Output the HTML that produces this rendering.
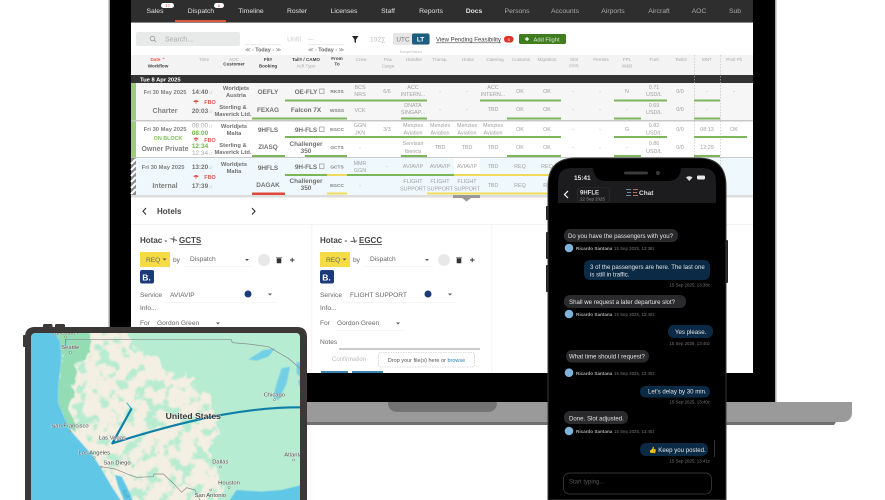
<!DOCTYPE html>
<html><head><meta charset="utf-8">
<style>
html,body{margin:0;padding:0;background:#fff;width:885px;height:500px;overflow:hidden}
svg{display:block;font-family:"Liberation Sans",sans-serif}
.c{text-anchor:middle}
.r{text-anchor:end}
.n{font-size:6.800px;fill:#e0e0e0;text-anchor:middle}
.n2{font-size:6.800px;fill:#aaa;text-anchor:middle}
.h{font-size:4.600px;fill:#aaa;text-anchor:middle}
.hb{font-size:4.600px;fill:#444;font-weight:bold;text-anchor:middle}
.g{font-size:5.400px;fill:#a0a0a0;text-anchor:middle}
.b{font-size:6.400px;fill:#707070;font-weight:bold;text-anchor:middle}
.s{font-size:5.800px;fill:#707070;font-weight:bold;text-anchor:middle}
.a{font-size:4.800px;fill:#808080;font-weight:bold;text-anchor:middle}
.d{font-size:5.800px;fill:#808080;font-weight:bold;text-anchor:middle}
.t{font-size:7px;fill:#808080;font-weight:bold;text-anchor:middle}
.lt{font-size:3.400px;fill:#bbb}
.fbo{font-size:5.400px;fill:#e2574c;font-weight:bold;text-anchor:middle}
.p{font-size:6.600px;fill:#666}
.ph{font-size:8px;fill:#444;font-weight:bold}
.m{font-size:6.100px;fill:#e4e4e4}
.nm{font-size:4.600px;fill:#aaa;font-weight:bold}
.dt{font-size:4.400px;fill:#777}
.ml{font-size:17.500px;fill:#444;text-anchor:middle;stroke:#fff;stroke-width:1.500px;paint-order:stroke}
</style></head><body>
<svg width="885" height="500" viewBox="0 0 885 500" xmlns="http://www.w3.org/2000/svg">
<defs>
<filter id="bl" x="0" y="0" width="100%" height="100%" color-interpolation-filters="sRGB"><feTurbulence type="fractalNoise" baseFrequency=".028" numOctaves="4" seed="7"/><feColorMatrix type="matrix" values="0 0 0 0 .72  0 0 0 0 .925  0 0 0 0 .82  9 0 0 0 -4.700"/><feGaussianBlur stdDeviation="1.500"/></filter>
<filter id="ro" x="-5%" y="-5%" width="110%" height="110%" color-interpolation-filters="sRGB"><feTurbulence type="fractalNoise" baseFrequency=".025" numOctaves="3" seed="3" result="t"/><feDisplacementMap in="SourceGraphic" in2="t" scale="45" xChannelSelector="R" yChannelSelector="G"/><feGaussianBlur stdDeviation="1.200"/></filter>
<filter id="sf"><feGaussianBlur stdDeviation="1.500"/></filter>
<clipPath id="mc"><path d="M31 500V338Q31 333 36 333H296Q300 333 300 338V500Z"/></clipPath>
<clipPath id="land"><path d="M100 0L135 65L140 110L130 200L130 250L165 330L235 410L255 440L290 500L330 545H900V0Z"/></clipPath>
</defs>
<rect width="885" height="500" fill="#fff"/>
<!-- laptop -->
<path d="M109 0H776V403H109Z" fill="#000"/>
<rect x="108.500" y="0" width="1.500" height="403" fill="#999"/>
<rect x="775" y="0" width="1.500" height="403" fill="#aaa"/>
<path d="M109 422H836L834 425H109Z" fill="#707070"/>
<path d="M109 402H852V412Q852 422 842 422H109Z" fill="#9a9a9a"/>
<path d="M388 402H497Q497 412 487 412H398Q388 412 388 402Z" fill="#737373"/>
<g style="filter:blur(.3px)">
<rect x="131" y="0" width="622" height="373" fill="#fff"/>
<rect x="131" y="0" width="622" height="22" fill="#2e2e2e"/>
<rect x="131" y="22" width="622" height="1" fill="#888"/>
<rect x="175" y="20" width="51" height="2" fill="#d9573a"/>
<text class="n" x="155" y="13">Sales</text><text class="n" x="201" y="13">Dispatch</text><text class="n" x="251" y="13">Timeline</text><text class="n" x="297" y="13">Roster</text><text class="n" x="344" y="13">Licenses</text><text class="n" x="388" y="13">Staff</text><text class="n" x="431" y="13">Reports</text><text class="n" x="474" y="13" font-weight="bold">Docs</text>
<text class="n2" x="517" y="13">Persons</text><text class="n2" x="565" y="13">Accounts</text><text class="n2" x="613" y="13">Airports</text><text class="n2" x="659" y="13">Aircraft</text><text class="n2" x="699" y="13">AOC</text><text class="n2" x="735" y="13">Sub</text>
<rect x="161" y="3" width="13" height="5" rx="2.500" fill="#fff"/><text class="c" x="167.500" y="7" font-size="4" fill="#d33">17</text>
<rect x="214" y="3" width="10" height="5" rx="2.500" fill="#fff"/><text class="c" x="219" y="7" font-size="4" fill="#d33">6</text>
<!-- toolbar -->
<rect x="136" y="32" width="104" height="14" rx="2" fill="#e8eaea"/>
<circle cx="152.500" cy="38.500" r="2.300" fill="none" stroke="#999" stroke-width=".8"/><path d="M154.200 40.200L156 42" stroke="#999" stroke-width=".8"/>
<text x="165" y="41.500" font-size="7" fill="#aaa">Search...</text>
<rect x="245" y="44.500" width="36" height=".6" fill="#ddd"/><rect x="308" y="44.500" width="36" height=".6" fill="#ddd"/>
<text x="287" y="41.500" font-size="7" fill="#ccc">Until</text><text x="308" y="41.500" font-size="6" fill="#ccc">—</text>
<text class="c" x="263" y="51.500" font-size="5.400" fill="#888">≪ ‹ <tspan font-weight="bold" fill="#666">Today</tspan> › ≫</text>
<text class="c" x="326" y="51.500" font-size="5.400" fill="#888">≪ ‹ <tspan font-weight="bold" fill="#666">Today</tspan> › ≫</text>
<path d="M352 36H358.500L356 39.500V43L354.500 42V39.500Z" fill="#222"/>
<text x="370" y="41.500" font-size="6.600" fill="#bbb">102∑</text>
<rect x="393" y="33" width="37" height="12" rx="2" fill="#e6e6e6"/><rect x="412" y="33.500" width="17.500" height="11" rx="2" fill="#1b5e80"/>
<text class="c" x="403" y="41.500" font-size="6.400" fill="#777">UTC</text><text class="c" x="420.500" y="41.500" font-size="6.400" fill="#fff" font-weight="bold">LT</text>
<text class="c" x="411" y="53" font-size="3.400" fill="#bbb">Europe/Vienna</text>
<text x="436" y="41.500" font-size="6" fill="#444" text-decoration="underline">View Pending Feasibility</text>
<rect x="504" y="36" width="9.500" height="6.500" rx="3.200" fill="#e0302a"/><text class="c" x="508.700" y="41" font-size="4" fill="#fff">6</text>
<rect x="519" y="34" width="47" height="10" rx="1.500" fill="#3f7d20"/>
<path d="M525 39h4M527 37v4" stroke="#fff" stroke-width="1.200"/><text x="533.500" y="41.300" font-size="5.800" fill="#dcebd0">Add Flight</text>
<!-- header -->
<rect x="131" y="55" width="622" height="20" fill="#f3f3f3"/>
<text x="158" y="61" font-size="4.600" font-weight="bold" fill="#e2574c" class="c">Date ⌃</text><text class="hb" x="158" y="67.500">Workflow</text>
<text class="h" x="204" y="61">Time</text><text class="h" x="234" y="61">AOC</text><text class="hb" x="234" y="65.500">Customer</text>
<text class="hb" x="268" y="61">Flt#</text><text class="hb" x="268" y="67.500">Booking</text><text class="hb" x="306" y="61">Tail# / CAMO</text><text class="h" x="306" y="67.500">Acft Type</text>
<text class="hb" x="337" y="60">From</text><text class="hb" x="337" y="65.500">To</text><text class="h" x="361" y="61">Crew</text><text class="h" x="388" y="61">Pax</text><text class="h" x="388" y="67.500">Cargo</text>
<text class="h" x="414" y="61">Handler</text><text class="h" x="440" y="61">Transp.</text><text class="h" x="468" y="61">Hotac</text><text class="h" x="495" y="61">Catering</text><text class="h" x="521" y="61">Customs</text><text class="h" x="547" y="61">Migration</text>
<text class="h" x="574" y="61">Slot</text><text class="h" x="574" y="67.500">PPR</text><text class="h" x="601" y="61">Permits</text><text class="h" x="627" y="61">FPL</text><text class="h" x="627" y="67.500">W&amp;B</text><text class="h" x="654" y="61">Fuel</text><text class="h" x="681" y="61">Tasks</text><text class="h" x="707" y="61">MNT</text><text class="h" x="734" y="61">Post Flt</text>
<rect x="131" y="75" width="622" height="8" fill="#333"/>
<text x="140" y="81.300" font-size="5.800" fill="#fff" font-weight="bold">Tue 8 Apr 2025</text>
<!-- rows bg -->
<rect x="131" y="83" width="622" height="37" fill="#f6f6f6"/>
<rect x="131" y="120" width="622" height="1.500" fill="#c8c8c8"/>
<rect x="131" y="121.500" width="622" height="36" fill="#fff"/>
<rect x="131" y="157" width="622" height="1.200" fill="#ccc"/>
<rect x="131" y="158" width="622" height="37" fill="#eff8fc"/>
<rect x="131" y="195" width="622" height="2.500" fill="#ddd"/>
<rect x="131" y="83" width="5" height="37" fill="#9ccc7a"/><rect x="131" y="121.500" width="5" height="36" fill="#9ccc7a"/>
<rect x="131" y="158" width="5" height="37" fill="#8a8a8a"/>
<path d="M131 164L136 159M131 170L136 165M131 176L136 171M131 182L136 177M131 188L136 183M131 194L136 189" stroke="#fff" stroke-width="2"/>
<rect x="454" y="158" width="26" height="16" fill="#fff"/>
<path d="M694.500 55V195M720.500 55V195" stroke="#bbb" stroke-width=".6" stroke-dasharray="1.500 1.500"/>
<!-- bars -->
<g fill="#7db65a">
<rect x="285" y="99.500" width="142" height="2"/><rect x="480" y="99.500" width="81" height="2"/><rect x="614" y="99.500" width="53" height="2"/><rect x="694" y="99.500" width="26" height="2"/>
<rect x="252" y="117.500" width="95" height="2"/><rect x="401" y="117.500" width="26" height="2"/><rect x="507" y="117.500" width="54" height="2"/><rect x="614" y="117.500" width="27" height="2"/><rect x="694" y="117.500" width="26" height="2"/>
<rect x="285" y="136" width="276" height="2"/><rect x="614" y="136" width="53" height="2"/><rect x="694" y="136" width="53" height="2"/>
<rect x="252" y="155" width="33" height="2"/><rect x="305" y="155" width="42" height="2"/><rect x="401" y="155" width="26" height="2"/><rect x="507" y="155" width="54" height="2"/><rect x="614" y="155" width="27" height="2"/><rect x="694" y="155" width="26" height="2"/>
<rect x="285" y="174" width="42" height="2"/><rect x="347" y="174" width="107" height="2"/>
</g>
<g fill="#f0dc5a"><rect x="327" y="174" width="20" height="2"/><rect x="454" y="174" width="106" height="2"/><rect x="327" y="192.500" width="20" height="2"/><rect x="427" y="192.500" width="133" height="2"/></g>
<rect x="252" y="192.500" width="33" height="2.500" fill="#e0483c"/>
<!-- row 1 -->
<text class="d" x="165" y="94">Fri 30 May 2025</text><text class="b" x="200" y="94">14:40</text><text class="lt" x="209" y="94">LT</text>
<text class="s" x="236" y="90">Worldjets</text><text class="s" x="236" y="97">Austria</text><text class="b" x="268" y="94">OEFLY</text><text class="b" x="306" y="94">OE-FLY</text><rect x="319.500" y="89" width="4.500" height="4.500" fill="none" stroke="#888" stroke-width=".6"/>
<text class="a" x="337" y="93">RKSS</text><text class="g" x="360" y="89">BCS</text><text class="g" x="360" y="96">NRS</text><text class="g" x="387" y="93">6/6</text><text class="g" x="413" y="89">ACC</text><text class="g" x="413" y="96">INTERN...</text><text class="g" x="440" y="93">-</text>
<text class="g" x="467" y="93">-</text><text class="g" x="493" y="89">ACC</text><text class="g" x="493" y="96">INTERN...</text><text class="g" x="520" y="93">OK</text><text class="g" x="547" y="93">OK</text><text class="g" x="573" y="93">-</text><text class="g" x="600" y="93">-</text><text class="g" x="627" y="93">N</text><text class="g" x="654" y="89">0.71</text><text class="g" x="654" y="96">USD/L</text><text class="g" x="680" y="93">0/0</text><text class="g" x="707" y="93">-</text><text class="g" x="734" y="93">-</text>
<path d="M193.500 102a2.500 2 0 0 1 5 0zM195 102.500l1 1.500 1-1.500z" fill="#e2574c"/><text class="fbo" x="210" y="104">FBO</text>
<text class="t" x="165" y="113">Charter</text><text class="b" x="200" y="113">20:03</text><text class="lt" x="209" y="113">LT</text>
<text class="s" x="233" y="109">Sterling &amp;</text><text class="s" x="233" y="116">Maverick Ltd.</text><text class="b" x="268" y="112">FEXAG</text><text class="b" x="306" y="112">Falcon 7X</text><text class="a" x="337" y="112">WSSS</text><text class="g" x="360" y="112">VCK</text><text class="g" x="413" y="107">DNATA</text><text class="g" x="413" y="114">SINGAP...</text><text class="g" x="440" y="111">-</text>
<text class="g" x="467" y="111">-</text><text class="g" x="493" y="111">TBD</text><text class="g" x="520" y="111">OK</text><text class="g" x="547" y="111">OK</text><text class="g" x="573" y="111">-</text><text class="g" x="600" y="111">-</text><text class="g" x="627" y="111">-</text><text class="g" x="654" y="107">0.69</text><text class="g" x="654" y="114">USD/L</text><text class="g" x="680" y="111">0/0</text><text class="g" x="707" y="111">-</text>
<!-- row 2 -->
<text class="d" x="165" y="131">Fri 30 May 2025</text><text x="168" y="140" font-size="5.400" fill="#7dc35a" font-weight="bold" class="c">ON BLOCK</text><text class="t" x="165" y="151">Owner Private</text>
<text x="200" y="127.500" font-size="6.400" fill="#aaa" class="c">08:00</text><text class="lt" x="209" y="127.500">LT</text><text x="200" y="135" font-size="6.400" fill="#6fb544" font-weight="bold" class="c">08:00</text><path d="M193.500 139.500a2.500 2 0 0 1 5 0zM195 140l1 1.500 1-1.500z" fill="#e2574c"/><text class="fbo" x="210" y="142">FBO</text><text x="200" y="148" font-size="6.400" fill="#6fb544" font-weight="bold" class="c">12:34</text><text x="200" y="155" font-size="6.400" fill="#aaa" class="c">12:34</text><text class="lt" x="209" y="155">LT</text>
<text class="s" x="234" y="128">Worldjets</text><text class="s" x="234" y="135">Malta</text><text class="s" x="233" y="147">Sterling &amp;</text><text class="s" x="233" y="154">Maverick Ltd.</text>
<text class="b" x="268" y="132">9HFLS</text><text class="b" x="306" y="132">9H-FLS</text><rect x="319.500" y="127" width="4.500" height="4.500" fill="none" stroke="#888" stroke-width=".6"/><text class="a" x="337" y="131">EGCC</text><text class="g" x="360" y="127">GGN</text><text class="g" x="360" y="134.500">JKN</text><text class="g" x="387" y="131">3/3</text>
<text class="g" x="413" y="127">Menzies</text><text class="g" x="413" y="134.500">Aviation</text><text class="g" x="440" y="127">Menzies</text><text class="g" x="440" y="134.500">Aviation</text><text class="g" x="467" y="127">Menzies</text><text class="g" x="467" y="134.500">Aviation</text><text class="g" x="493" y="127">Menzies</text><text class="g" x="493" y="134.500">Aviation</text>
<text class="g" x="520" y="131">OK</text><text class="g" x="547" y="131">OK</text><text class="g" x="573" y="131">-</text><text class="g" x="600" y="131">-</text><text class="g" x="627" y="131">G</text><text class="g" x="654" y="127">0.82</text><text class="g" x="654" y="134.500">USD/L</text><text class="g" x="680" y="131">0/0</text><text class="g" x="707" y="131">08:13</text><text class="g" x="734" y="131">OK</text>
<text class="b" x="268" y="149">ZIASQ</text><text class="b" x="306" y="146">Challenger</text><text class="b" x="306" y="153">350</text><text class="a" x="337" y="149">GCTS</text><text class="g" x="360" y="149">-</text><text class="g" x="413" y="145">Servisair</text><text class="g" x="413" y="153">Iberica</text><text class="g" x="440" y="149">TBD</text><text class="g" x="467" y="149">TBD</text><text class="g" x="493" y="149">TBD</text><text class="g" x="520" y="149">OK</text><text class="g" x="547" y="149">OK</text><text class="g" x="573" y="149">-</text><text class="g" x="600" y="149">-</text><text class="g" x="627" y="149">-</text><text class="g" x="654" y="145">0.86</text><text class="g" x="654" y="153">USD/L</text><text class="g" x="680" y="149">0/0</text><text class="g" x="707" y="149">12:29</text>
<!-- row 3 -->
<text class="d" x="163" y="169">Fri 30 May 2025</text><text class="b" x="200" y="169">13:20</text><text class="lt" x="209" y="169">LT</text>
<text class="s" x="234" y="166">Worldjets</text><text class="s" x="234" y="173">Malta</text><text class="b" x="268" y="170">9HFLS</text><text class="b" x="306" y="169">9H-FLS</text><rect x="319.500" y="164" width="4.500" height="4.500" fill="none" stroke="#888" stroke-width=".6"/><text class="a" x="337" y="168.500">GCTS</text><text class="g" x="360" y="165">MMR</text><text class="g" x="360" y="172">GGN</text><text class="g" x="387" y="168">-</text><text class="g" x="413" y="168">AVIAVIP</text><text class="g" x="440" y="168">AVIAVIP</text><text class="g" x="467" y="168">AVIAVIP</text><text class="g" x="493" y="168">TBD</text><text class="g" x="520" y="168">REQ</text><text class="g" x="547" y="168">REQ</text>
<path d="M193.500 177a2.500 2 0 0 1 5 0zM195 177.500l1 1.500 1-1.500z" fill="#e2574c"/><text class="fbo" x="210" y="179">FBO</text>
<text class="t" x="165" y="188">Internal</text><text class="b" x="200" y="188">17:39</text><text class="lt" x="209" y="188">LT</text><text class="b" x="268" y="187">DAGAK</text><text class="b" x="306" y="183">Challenger</text><text class="b" x="306" y="190">350</text><text class="a" x="337" y="187">EGCC</text><text class="g" x="360" y="187">-</text>
<text class="g" x="413" y="183">FLIGHT</text><text class="g" x="413" y="190.500">SUPPORT</text><text class="g" x="440" y="183">FLIGHT</text><text class="g" x="440" y="190.500">SUPPORT</text><text class="g" x="467" y="183">FLIGHT</text><text class="g" x="467" y="190.500">SUPPORT</text><text class="g" x="493" y="187">TBD</text><text class="g" x="520" y="187">REQ</text><text class="g" x="547" y="187">RE</text>
<path d="M453 195H480V198H471L466.500 201.500L462 198H453Z" fill="#999"/>
<!-- panel -->
<rect x="131" y="224" width="622" height=".7" fill="#eee"/>
<rect x="311.500" y="224" width=".7" height="149" fill="#eee"/><rect x="491.500" y="224" width=".7" height="149" fill="#eee"/>
<path d="M146 208L143 211.200L146 214.500M252 208L255 211.200L252 214.500" fill="none" stroke="#333" stroke-width="1.100"/>
<text class="ph" x="157" y="214">Hotels</text>
<text class="ph" x="140" y="243">Hotac -</text><path d="M170.500 238.500L177 240.500M174 236.500L173.500 242.500" stroke="#555" stroke-width="1"/><text class="ph" x="179" y="243" text-decoration="underline">GCTS</text>
<text class="ph" x="320" y="243">Hotac -</text><path d="M350.500 241.500L357 241M353.500 237L355 243" stroke="#555" stroke-width="1"/><text class="ph" x="359" y="243" text-decoration="underline">EGCC</text>
<g>
<rect x="140" y="252" width="30" height="15" fill="#f5dc45"/><text class="p" x="146" y="262">REQ</text><path d="M162.500 258.500h4l-2 2z" fill="#555"/>
<text class="p" x="173" y="262" fill="#888">by</text><text class="p" x="190" y="261">Dispatch</text><path d="M245 259h4l-2 2z" fill="#555"/><rect x="183" y="266" width="70" height=".6" fill="#eee"/>
<circle cx="264" cy="260" r="6" fill="#e8e8e8"/>
<path d="M276 257.500h6M277 258.500h4v4.500h-4z" fill="#333" stroke="#333" stroke-width=".6"/><path d="M290 260h4.500M292.200 257.800v4.500" stroke="#333" stroke-width=".9"/>
<rect x="140" y="270" width="14" height="13.500" rx="2" fill="#1a3a7a"/><text class="c" x="146.500" y="280.500" font-size="8.500" fill="#fff" font-weight="bold">B.</text>
<text class="p" x="140" y="297" fill="#888">Service</text><rect x="163" y="302" width="113" height=".6" fill="#eee"/>
<circle cx="248" cy="294" r="3.500" fill="#1a3a7a"/><path d="M268 293.500h4l-2 2z" fill="#555"/>
<text class="p" x="140" y="310" fill="#888">Info...</text><text class="p" x="140" y="325" fill="#888">For</text><text class="p" x="157" y="325">Gordon Green</text><path d="M216 322.500h4l-2 2z" fill="#555"/>
</g>
<text class="p" x="170" y="297">AVIAVIP</text>
<g transform="translate(180 0)">
<rect x="140" y="252" width="30" height="15" fill="#f5dc45"/><text class="p" x="146" y="262">REQ</text><path d="M162.500 258.500h4l-2 2z" fill="#555"/>
<text class="p" x="173" y="262" fill="#888">by</text><text class="p" x="190" y="261">Dispatch</text><path d="M245 259h4l-2 2z" fill="#555"/><rect x="183" y="266" width="70" height=".6" fill="#eee"/>
<circle cx="264" cy="260" r="6" fill="#e8e8e8"/>
<path d="M276 257.500h6M277 258.500h4v4.500h-4z" fill="#333" stroke="#333" stroke-width=".6"/><path d="M290 260h4.500M292.200 257.800v4.500" stroke="#333" stroke-width=".9"/>
<rect x="140" y="270" width="14" height="13.500" rx="2" fill="#1a3a7a"/><text class="c" x="146.500" y="280.500" font-size="8.500" fill="#fff" font-weight="bold">B.</text>
<text class="p" x="140" y="297" fill="#888">Service</text><rect x="163" y="302" width="113" height=".6" fill="#eee"/>
<circle cx="248" cy="294" r="3.500" fill="#1a3a7a"/><path d="M268 293.500h4l-2 2z" fill="#555"/>
<text class="p" x="140" y="310" fill="#888">Info...</text><text class="p" x="140" y="325" fill="#888">For</text><text class="p" x="157" y="325">Gordon Green</text><path d="M216 322.500h4l-2 2z" fill="#555"/>
<rect x="155" y="330" width="70" height=".6" fill="#eee"/>
</g>
<text class="p" x="350" y="297">FLIGHT SUPPORT</text>
<text class="p" x="320" y="344" fill="#888">Notes</text><rect x="339" y="348.500" width="141" height="1" fill="#999"/>
<text x="332" y="361" font-size="6" fill="#bbb">Confirmation</text>
<rect x="378.500" y="352.500" width="96" height="14.500" rx="2" fill="none" stroke="#bbb" stroke-width=".6" stroke-dasharray="1.500 1"/>
<text class="c" x="426.500" y="362" font-size="5.500" fill="#555">Drop your file(s) here or <tspan fill="#2b7fb8">browse</tspan></text>
<rect x="321" y="371" width="27" height="2" fill="#3d85b0"/><rect x="352" y="371" width="31" height="2" fill="#3d85b0"/>
</g>
<!-- tablet -->
<rect x="43" y="324" width="9.500" height="5" rx="1.500" fill="#3d3838"/><rect x="55" y="324" width="10" height="5" rx="1.500" fill="#3d3838"/><rect x="23" y="335" width="3" height="12" rx="1" fill="#3d3838"/>
<path d="M25 500V337Q25 327 35 327H297Q307 327 307 337V500Z" fill="#3d3838"/>
<g clip-path="url(#mc)"><g transform="translate(15 320) scale(.33333)">
<rect x="0" y="0" width="900" height="560" fill="#f3efe2"/>
<g clip-path="url(#land)">
<path d="M335 0H900V560H610L615 480L590 390L605 320L590 245L545 170L470 150L410 110L345 70Z" fill="#b6ecd2" filter="url(#ro)"/>
<rect x="130" y="30" width="500" height="520" filter="url(#bl)"/>
<path d="M100 20L130 65L135 110L125 200L125 255L160 335L185 340L170 270L170 200L195 130L225 100L215 20Z" fill="#93dcb4" filter="url(#ro)"/>
</g>
<path d="M0 0H100L135 65L140 110L130 200L130 250L165 330L235 410L255 440L290 500L330 560H0Z" fill="#60c8e6" filter="url(#sf)"/>
<path d="M630 560L665 510L740 515L800 510L900 485V560Z" fill="#60c8e6" filter="url(#sf)"/>
<path d="M700 118L745 90L780 85L760 110L725 122ZM800 145L825 140L815 190L790 240L775 230L785 190ZM845 125L860 130V175L845 160ZM850 180H865V200L852 198Z" fill="#72cfe6" filter="url(#sf)"/>
<path d="M300 465L320 470L345 520L360 560H335L310 500Z" fill="#60c8e6" filter="url(#sf)"/>
<path d="M150 58H648L652 68L700 72L760 80L820 115L855 145" fill="none" stroke="#888" stroke-width="2"/>
<path d="M258 440L300 447L345 465L365 472L415 470L417 462L445 462L475 490L500 517L515 503L540 510L555 540" fill="none" stroke="#888" stroke-width="2"/>
<path d="M335 248L349 266M152 58V80" fill="none" stroke="#3fa8d0" stroke-width="3"/>
<path d="M855 262C720 262 560 285 292 370L350 265" fill="none" stroke="#0e7fa6" stroke-width="6.500" stroke-linejoin="round"/>
<text class="ml" x="150" y="43">Vancouver</text><text class="ml" x="166" y="87">Seattle</text>
<text class="ml" x="165" y="323">San Francisco</text><text class="ml" x="292" y="358">Las Vegas</text><text class="ml" x="238" y="404">Los Angeles</text><text class="ml" x="306" y="433">San Diego</text>
<text x="535" y="297" class="c" font-size="26" font-weight="bold" fill="#333" stroke="#fff" stroke-width="1.500" paint-order="stroke">United States</text>
<text class="ml" x="778" y="230">Chicago</text><text class="ml" x="616" y="431">Dallas</text><text class="ml" x="642" y="493">Houston</text><text class="ml" x="586" y="531">San Antonio</text><text class="ml" x="835" y="410">Atlanta</text>
<text x="322" y="512" font-size="15" fill="#3a9fc0" transform="rotate(62 322 512)">Gulf of</text>
<g fill="#fff" stroke="#666" stroke-width="1.500"><circle cx="152" cy="51" r="3"/><circle cx="166" cy="97" r="3"/><circle cx="165" cy="333" r="3"/><circle cx="238" cy="413" r="3"/><circle cx="258" cy="441" r="3"/><circle cx="778" cy="239" r="3"/><circle cx="616" cy="441" r="3"/><circle cx="642" cy="503" r="3"/><circle cx="587" cy="510" r="3"/><circle cx="836" cy="420" r="3"/></g>
</g></g>
<!-- phone -->
<g fill="#222"><rect x="546" y="206" width="3" height="14" rx="1"/><rect x="546" y="232" width="3" height="27" rx="1"/><rect x="546" y="265" width="3" height="27" rx="1"/><rect x="725" y="240" width="3" height="43" rx="1"/></g>
<path d="M548 500V186Q548 158 576 158H698Q726 158 726 186V500Z" fill="#000" stroke="#3a3a3a" stroke-width="1"/>
<path d="M558 203V182Q558 168 572 168H702Q716 168 716 182V203Z" fill="#1c1c1e"/>
<path d="M593 168H681Q680 181 668 181H606Q594 181 593 168Z" fill="#000"/>
<rect x="624" y="171.500" width="24" height="3" rx="1.500" fill="#3a3a3c"/><circle cx="658" cy="173" r="2" fill="#3a3a3c"/>
<text x="574" y="180" font-size="6.500" font-weight="bold" fill="#e8e8e8">15:41</text>
<path d="M686 177.500a5 5 0 0 1 6.500 0L689.300 181Z" fill="#ddd"/><rect x="697" y="175.500" width="8" height="4" rx="1.200" fill="#e8e8e8"/>
<path d="M568 191L564.500 194.500L568 198" fill="none" stroke="#fff" stroke-width="1.200"/>
<rect x="577.500" y="187.500" width="32" height="15" rx="4" fill="none" stroke="#333" stroke-width=".6"/>
<text x="580" y="194.500" font-size="6" fill="#ddd" font-weight="bold">9HFLE</text><text x="580" y="200.500" font-size="4.400" fill="#999">22 Sep 2025</text>
<path d="M626 189.500H631M627 192.500H631M626 195.500H631" stroke="#7fb3d9" stroke-width=".8"/><path d="M633 189.500H638M633 192.500H637M633 195.500H638" stroke="#d98a7f" stroke-width=".8"/>
<text x="639" y="195" font-size="6.500" fill="#ddd" font-weight="bold">Chat</text>
<!-- messages -->
<g fill="#2a2a2c"><rect x="564" y="229" width="114" height="13" rx="6"/><rect x="564" y="295" width="122" height="13" rx="6"/><rect x="566" y="350" width="83" height="12.500" rx="6"/><rect x="564" y="411" width="64" height="13" rx="6"/></g>
<g fill="#0a2a45"><rect x="584" y="260" width="126" height="20" rx="6"/><rect x="668" y="325" width="45" height="13" rx="6"/><rect x="640" y="386" width="70" height="11.500" rx="5.500"/><rect x="640" y="443" width="68" height="13" rx="6"/></g>
<text class="m" x="568" y="238">Do you have the passengers with you?</text>
<text class="m" x="590" y="269">3 of the passengers are here. The last one</text><text class="m" x="590" y="276.500">is still in traffic.</text>
<text class="m" x="569" y="304">Shall we request a later departure slot?</text>
<text class="m" x="675" y="334">Yes please.</text>
<text class="m" x="569" y="358.500">What time should I request?</text>
<text class="m" x="648" y="393.500">Let's delay by 30 min.</text>
<text class="m" x="569" y="420.500">Done. Slot adjusted.</text>
<text class="m" x="649" y="452">👍 Keep you posted.</text>
<g fill="#7fb3d9"><circle cx="569" cy="248" r="4.300"/><circle cx="569" cy="314" r="4.300"/><circle cx="569" cy="372.700" r="4.300"/><circle cx="569" cy="431" r="4.300"/></g>
<text class="nm" x="576" y="250">Ricardo Santana</text><text class="dt" x="614" y="250">15 Sep 2025, 13:38z</text>
<text class="nm" x="576" y="316">Ricardo Santana</text><text class="dt" x="614" y="316">15 Sep 2025, 13:40z</text>
<text class="nm" x="576" y="375">Ricardo Santana</text><text class="dt" x="614" y="375">15 Sep 2025, 13:40z</text>
<text class="nm" x="576" y="433">Ricardo Santana</text><text class="dt" x="614" y="433">15 Sep 2025, 13:40z</text>
<text class="dt r" x="710" y="286.500">15 Sep 2025, 13:38z</text><text class="dt r" x="710" y="345">15 Sep 2025, 13:40z</text><text class="dt r" x="710" y="403.500">15 Sep 2025, 13:40z</text><text class="dt r" x="710" y="462.500">15 Sep 2025, 13:41z</text>
<rect x="714" y="440" width="1" height="17" fill="#333"/>
<rect x="563.500" y="473" width="148" height="21" rx="6" fill="none" stroke="#444" stroke-width=".7"/>
<text x="569" y="483.500" font-size="6" fill="#555">Start typing...</text>
</svg>
</body></html>
